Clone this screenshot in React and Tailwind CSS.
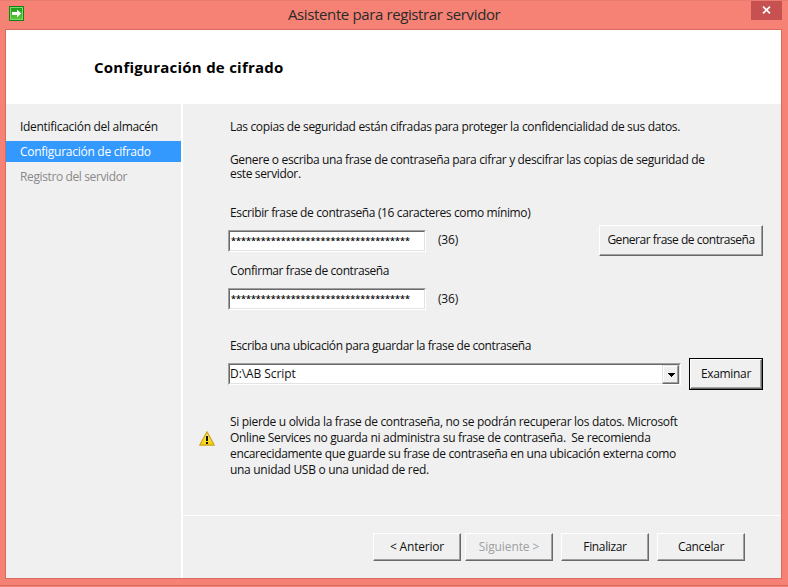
import React from "react";

function Line({ children, className = "" }) {
  return <div className={`whitespace-pre ${className}`}>{children}</div>;
}

function Button({ children, className = "" }) {
  return (
    <button
      className={`flex items-center justify-center whitespace-pre border border-t-white border-l-white border-r-[#696969] border-b-[#696969] bg-[#f0f0f0] shadow-[inset_-1px_-1px_0_#a0a0a0] ${className}`}
    >
      {children}
    </button>
  );
}

function Sunken({ children, className = "" }) {
  return (
    <div className={`h-[22px] border border-t-[#a0a0a0] border-l-[#a0a0a0] border-r-white border-b-white ${className}`}>
      <div className="flex h-full w-full border border-t-[#696969] border-l-[#696969] border-r-[#e3e3e3] border-b-[#e3e3e3] bg-white">
        {children}
      </div>
    </div>
  );
}

function PasswordRow({ countClass }) {
  return (
    <div className="flex h-[22px]">
      <Sunken className="w-[198px]">
        <div className="pl-px text-[9px] font-semibold leading-[18px] tracking-[0.04px] text-black">{"*".repeat(36)}</div>
      </Sunken>
      <div className={`ml-[12px] tracking-[-0.2px] ${countClass}`}>(36)</div>
    </div>
  );
}

function AppIcon() {
  return (
    <svg width="15" height="15" viewBox="0 0 15 15" className="block">
      <defs>
        <linearGradient id="green" x1="0" y1="0" x2="0" y2="1">
          <stop offset="0" stopColor="#1c9a1c" />
          <stop offset="1" stopColor="#62c936" />
        </linearGradient>
      </defs>
      <rect width="15" height="15" rx="0.5" fill="#14801c" />
      <rect x="1.5" y="1.5" width="12" height="12" fill="url(#green)" stroke="#7fd966" />
      <path d="M3 6h5V3.5L12.2 7.5 8 11.5V9H3z" fill="#fff" />
    </svg>
  );
}

function WarningIcon() {
  return (
    <svg width="16" height="15" viewBox="0 0 16 15" className="block">
      <defs>
        <linearGradient id="amber" x1="0" y1="0" x2="0" y2="1">
          <stop offset="0" stopColor="#fff36a" />
          <stop offset="1" stopColor="#f5d000" />
        </linearGradient>
      </defs>
      <path d="M8 .9 15.3 14.2H.7z" fill="url(#amber)" stroke="#d0a52c" strokeWidth="1.3" strokeLinejoin="round" />
      <path d="M7 5h2v5H7zM7 11h2v2H7z" fill="#111" />
    </svg>
  );
}

export default function App() {
  return (
    <div className="flex h-[587px] w-[788px] flex-col overflow-hidden border-t border-t-[#e97b70] bg-[#f68275] font-['Open_Sans','Noto_Sans',sans-serif] text-[12px] tracking-[-0.35px] text-[#111]">
      <header className="flex h-7 shrink-0 items-start">
        <div className="w-[151px] pl-[9px] pt-[5px]">
          <AppIcon />
        </div>
        <div className="flex-1 pl-[137px] text-[15px] leading-[26px] tracking-[-0.38px] text-[#2a2a2a]">
          <Line>Asistente para registrar servidor</Line>
        </div>
        <button className="-mt-px mr-[6px] flex h-5 w-[31px] items-center justify-center bg-[#c75050]">
          <svg width="9" height="8" viewBox="0 0 9 8">
            <path d="M1 .7 8 7.3M8 .7 1 7.3" stroke="#fff" strokeWidth="1.7" />
          </svg>
        </button>
      </header>

      <div className="ml-[5px] flex h-[550px] w-[777px] shrink-0 flex-col border border-[#d76b60] bg-[#f0f0f0]">
        <div className="h-[74px] shrink-0 bg-white pl-[88px] pt-[27px] text-[15px] font-bold leading-[20px] tracking-[0.25px] text-black">
          <Line>Configuración de cifrado</Line>
        </div>
        <div className="flex flex-1">
          <nav className="w-[175px] pt-3 leading-[21px] tracking-[-0.3px]">
            <Line className="mb-1 h-[21px] pl-[14px]">Identificación del almacén</Line>
            <Line className="mb-1 h-[21px] bg-[#3399ff] pl-[14px] tracking-[-0.27px] text-white">Configuración de cifrado</Line>
            <Line className="h-[21px] pl-[14px] tracking-[-0.38px] text-[#8a8a8a]">Registro del servidor</Line>
          </nav>
          <div className="flex w-[600px] flex-col border-l-2 border-white">
            <div className="h-[411px] pt-[15px]">
              <Line className="ml-[47px] h-[16px] leading-[16px] tracking-[-0.34px]">Las copias de seguridad están cifradas para proteger la confidencialidad de sus datos.</Line>
              <p className="ml-[47px] mt-[18px] h-[28px] whitespace-pre leading-[14px]">
                Genere o escriba una frase de contraseña para cifrar y descifrar las copias de seguridad de
                <br />
                este servidor.
              </p>
              <div className="ml-[45px] mt-[24px] flex h-[106px] w-[535px] justify-between">
                <div>
                  <Line className="mb-[9px] ml-[2px] h-[16px] leading-[16px] tracking-[-0.37px]">Escribir frase de contraseña (16 caracteres como mínimo)</Line>
                  <PasswordRow countClass="leading-[20px]" />
                  <Line className="mb-[9px] ml-[2px] mt-[11px] h-[16px] leading-[16px] tracking-[-0.41px]">Confirmar frase de contraseña</Line>
                  <PasswordRow countClass="leading-[22px]" />
                </div>
                <Button className="mt-5 h-[31px] w-[164px] pb-px tracking-[-0.48px]">Generar frase de contraseña</Button>
              </div>
              <Line className="ml-[47px] mt-[27px] h-[16px] leading-[16px] tracking-[-0.41px]">Escriba una ubicación para guardar la frase de contraseña</Line>
              <div className="ml-[45px] mt-[4px] flex h-[32px]">
                <Sunken className="mt-[5px] w-[453px]">
                  <div className="w-[433px] leading-[17px] tracking-[-0.08px]">D:\AB Script</div>
                  <div className="flex h-[19px] w-[17px] shrink-0 items-center justify-center border border-t-[#e3e3e3] border-l-[#e3e3e3] border-r-[#696969] border-b-[#696969] bg-[#f0f0f0] shadow-[inset_-1px_-1px_0_#a0a0a0,inset_1px_1px_0_#fff]">
                    <svg width="7" height="4" viewBox="0 0 7 4" className="ml-px" shapeRendering="crispEdges">
                      <path d="M0 0h7L3.5 4z" fill="#000" />
                    </svg>
                  </div>
                </Sunken>
                <div className="ml-2 h-[32px] w-[74px] border border-black">
                  <Button className="h-full w-full">Examinar</Button>
                </div>
              </div>
              <div className="mt-[24px] flex">
                <div className="ml-[16px] mt-[17px] w-[31px]">
                  <WarningIcon />
                </div>
                <div className="leading-[16px]">
                  <Line className="tracking-[-0.31px]">Si pierde u olvida la frase de contraseña, no se podrán recuperar los datos. Microsoft</Line>
                  <Line className="tracking-[-0.32px]">Online Services no guarda ni administra su frase de contraseña.  Se recomienda</Line>
                  <Line>encarecidamente que guarde su frase de contraseña en una ubicación externa como</Line>
                  <Line className="tracking-[-0.3px]">una unidad USB o una unidad de red.</Line>
                </div>
              </div>
            </div>
            <footer className="flex h-[63px] border-t border-white pl-[190px] pt-[17px]">
              <Button className="h-7 w-[88px] tracking-[-0.2px]">{"< Anterior"}</Button>
              <Button className="ml-1 h-7 w-[88px] tracking-[-0.1px] text-[#a0a0a0]">{"Siguiente >"}</Button>
              <Button className="ml-2 h-7 w-[88px]">Finalizar</Button>
              <Button className="ml-2 h-7 w-[88px]">Cancelar</Button>
            </footer>
          </div>
        </div>
      </div>
      <div className="mt-[6px] h-px shrink-0 bg-[#d76b60]" />
    </div>
  );
}
